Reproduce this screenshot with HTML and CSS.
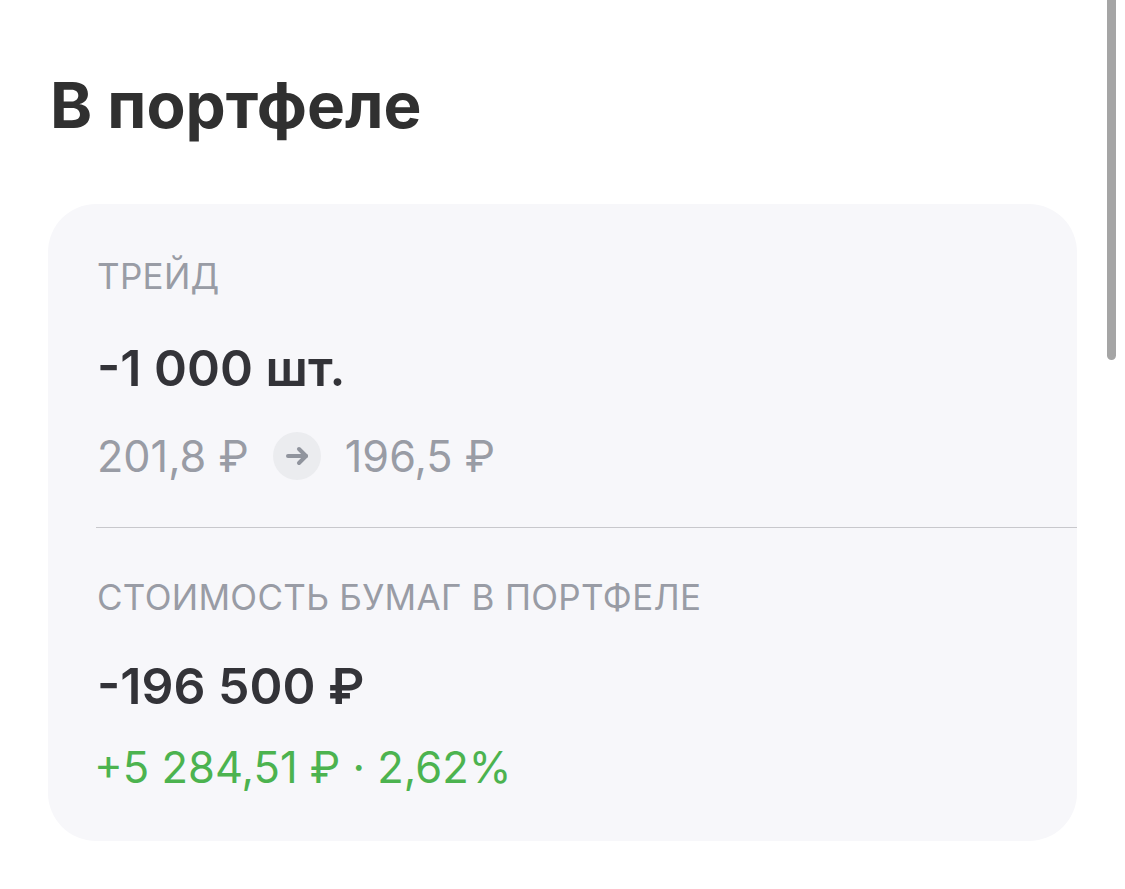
FILE: index.html
```html
<!DOCTYPE html>
<html lang="ru">
<head>
    <meta charset="UTF-8">
    <meta name="viewport" content="width=device-width, initial-scale=1.0">
    <title>В портфеле</title>
    <link rel="stylesheet" href="styles.css">
</head>
<body>
    <div class="scroll-thumb"></div>
    <div class="page">
        <h1>В портфеле</h1>
        <div class="card">
            <div class="section">
                <div class="label">ТРЕЙД</div>
                <div class="value">-1 000 шт.</div>
                <div class="price-row">
                    <span>201,8 ₽</span>
                    <span class="arrow">
                        <svg width="24" height="24" viewBox="0 0 24 24" fill="none" stroke="#90949d" stroke-width="4" stroke-linecap="round" stroke-linejoin="round">
                            <path d="M3 12H21"/>
                            <path d="M14 5L21 12L14 19"/>
                        </svg>
                    </span>
                    <span>196,5 ₽</span>
                </div>
            </div>
            <div class="divider"></div>
            <div class="section section-bottom">
                <div class="label">СТОИМОСТЬ БУМАГ В ПОРТФЕЛЕ</div>
                <div class="value">-196 500 ₽</div>
                <div class="profit">+5 284,51 ₽ · 2,62%</div>
            </div>
        </div>
    </div>
</body>
</html>
```

FILE: styles.css
```css
body {
    font-family: Inter, "Liberation Sans", sans-serif;
    margin: 0;
    padding: 0;
    background-color: #fff;
    color: #333;
    height: 889px;
    overflow: hidden;
}

.page {
    padding: 69px 48px 0;
}

h1 {
    font-size: 63.8px;
    line-height: 72px;
    font-weight: 700;
    margin: 0 0 63px 2px;
    color: #303030;
}

.card {
    width: 1029px;
    height: 637px;
    background: #f7f7fa;
    border-radius: 48px;
    box-sizing: border-box;
    padding-top: 53px;
}

.section {
    padding-left: 49px;
}

.section-bottom {
    padding-top: 50px;
}

.label {
    font-size: 35px;
    line-height: 38px;
    letter-spacing: 0.3px;
    color: #999ca5;
}

.value {
    font-size: 50px;
    line-height: 58px;
    font-weight: 600;
    margin-top: 44px;
    color: #333338;
}

.section-bottom .value {
    margin-top: 41px;
}

.price-row {
    display: flex;
    align-items: center;
    gap: 24px;
    font-size: 43.2px;
    line-height: 50px;
    color: #999ca5;
    margin-top: 34px;
}

.arrow {
    width: 48px;
    height: 48px;
    border-radius: 50%;
    background: #ebecef;
    display: flex;
    align-items: center;
    justify-content: center;
}

.divider {
    height: 1px;
    background: #c8c8cc;
    margin: 46px 0 0 48px;
}

.profit {
    font-size: 43.5px;
    line-height: 50px;
    color: #4cb34f;
    margin-top: 27px;
    margin-left: -3px;
}

.scroll-thumb {
    position: absolute;
    top: 0;
    left: 1107px;
    width: 9px;
    height: 360px;
    background: #a5a5a5;
    border-radius: 0 0 5px 5px;
}
```
